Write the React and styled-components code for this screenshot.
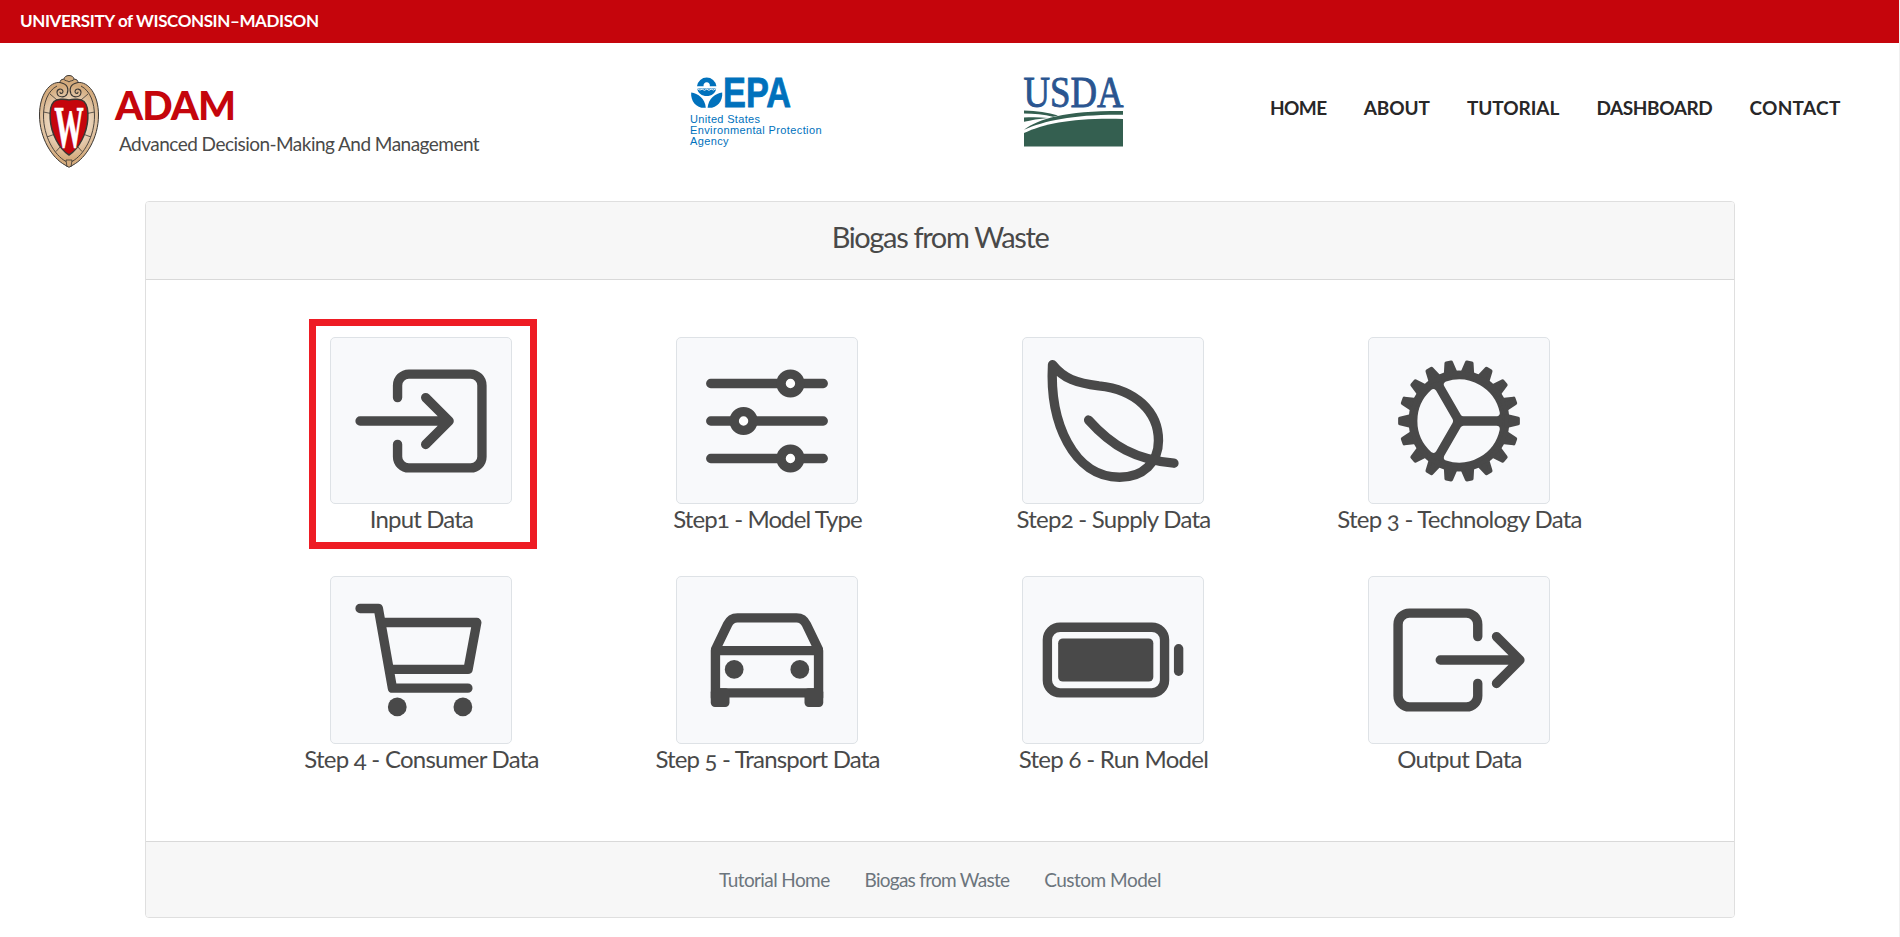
import React from 'react';
import styled, { createGlobalStyle } from 'styled-components';

const GlobalStyle = createGlobalStyle`
  *, *::before, *::after { box-sizing: border-box; }
  body { margin: 0; background: #fff; color: #494949; font-family: Lato, "Liberation Sans", sans-serif; }
  a { color: inherit; text-decoration: none; }
`;

const Page = styled.div`
  min-height: 937px;
  overflow: hidden;
  border-right: 1px solid #f0f0f0;
`;

const TopBar = styled.div`
  display: flex;
  align-items: center;
  height: 43px;
  padding: 0 0 2px 20px;
  background: #c5050c;
  color: #fff;
  font-size: 17px;
  font-weight: 700;
  letter-spacing: -0.4px;
`;

const Header = styled.header`
  display: grid;
  grid-template-columns: 649px 336px 247px auto;
  align-items: start;
  height: 158px;
  padding: 31px 0 0 38px;

  svg { overflow: visible; }
`;

const Brand = styled.a`
  display: flex;
  align-items: flex-start;
  gap: 15px;
`;

const BrandText = styled.div`
  padding-top: 7px;
`;

const SiteTitle = styled.h1`
  margin: 0;
  color: #c5050c;
  font-size: 40px;
  font-weight: 900;
  line-height: 48px;
  letter-spacing: -0.9px;
`;

const Tagline = styled.p`
  margin: 3px 0 0 4px;
  font-size: 19px;
  line-height: 23px;
  letter-spacing: -0.53px;
`;

const Nav = styled.nav`
  display: flex;
  gap: 37.2px;
  padding-top: 22px;
  color: #282728;
  font-size: 19px;
  font-weight: 700;
  line-height: 23px;
`;

const NavLink = styled.a`
  letter-spacing: ${(p) => p.$tracking}px;
`;

const Card = styled.main`
  width: 1590px;
  margin-left: 145px;
  border: 1px solid #dfdfdf;
  border-radius: 4px;
  overflow: hidden;
`;

const CardHeader = styled.div`
  height: 78px;
  padding-top: 17px;
  background: #f7f7f7;
  border-bottom: 1px solid #d9d9d9;
  text-align: center;
`;

const CardTitle = styled.h2`
  margin: 0;
  font-size: 29px;
  font-weight: 400;
  line-height: 35px;
  letter-spacing: -1.35px;
`;

const StepGrid = styled.div`
  display: grid;
  grid-template-columns: repeat(4, 346px);
  justify-content: center;
  align-content: start;
  row-gap: 43px;
  height: 561px;
  padding-top: 57px;
`;

const Step = styled.a`
  position: relative;
  display: flex;
  flex-direction: column;
  align-items: center;
`;

const Tile = styled.div`
  display: flex;
  align-items: center;
  justify-content: center;
  width: 182.4px;
  height: 167.3px;
  background: #f8f9fb;
  border: 1px solid #dee2e6;
  border-radius: 5px;
`;

const StepLabel = styled.span`
  padding-left: 1px;
  font-size: 24px;
  line-height: 29px;
  font-variant-numeric: oldstyle-nums;
  letter-spacing: ${(p) => p.$tracking}px;
  white-space: nowrap;
`;

const Highlight = styled.div`
  position: absolute;
  top: -18px;
  left: 50%;
  width: 228px;
  height: 230px;
  margin-left: -112px;
  border: 7px solid #ee1c24;
`;

const CardFooter = styled.div`
  display: flex;
  justify-content: center;
  gap: 35px;
  height: 76px;
  padding-top: 26px;
  background: #f7f7f7;
  border-top: 1px solid #d9d9d9;
`;

const FooterLink = styled.a`
  color: #6c757d;
  font-size: 19px;
  line-height: 23px;
  letter-spacing: ${(p) => p.$tracking}px;
`;

const INK = '#494949';

const Icon = ({ children }) => (
  <svg width="150" height="150" viewBox="0 0 16 16" fill="none" stroke={INK} strokeWidth="1" strokeLinecap="round" strokeLinejoin="round">
    {children}
  </svg>
);

const EnterIcon = () => (
  <Icon>
    <path d="M5.5 5.5V4.2A1.2 1.2 0 0 1 6.7 3H13.3A1.2 1.2 0 0 1 14.5 4.2V11.8A1.2 1.2 0 0 1 13.3 13H6.7A1.2 1.2 0 0 1 5.5 11.8V10.5" />
    <path d="M8.5 5.5L11 8L8.5 10.5M1.5 8H10.9" />
  </Icon>
);

const ExitIcon = () => (
  <Icon>
    <path d="M10 5.5V4.2A1.2 1.2 0 0 0 8.8 3H2.7A1.2 1.2 0 0 0 1.5 4.2V11.8A1.2 1.2 0 0 0 2.7 13H8.8A1.2 1.2 0 0 0 10 11.8V10.5" />
    <path d="M12 5.5L14.5 8L12 10.5M6 8H14.4" />
  </Icon>
);

const SlidersIcon = () => (
  <Icon>
    <path d="M2 4H14M2 8H14M2 12H14" />
    <g fill="#fff">
      <circle cx="10.5" cy="4" r="1" />
      <circle cx="5.5" cy="8" r="1" />
      <circle cx="10.5" cy="12" r="1" />
    </g>
  </Icon>
);

const LeafIcon = () => (
  <Icon>
    <path d="M1.55 2C2.75 3.5 4.1 3.95 6.5 4.25C10.4 4.65 12.85 7 12.85 10.1C12.85 12.4 11.2 14 8.7 14C3.8 14 1.2 8.2 1.55 2Z" />
    <path d="M5.4 7.9C7.9 10.7 10.4 12.1 14.5 12.5" />
  </Icon>
);

const polar = (radius, degrees) => {
  const a = (degrees * Math.PI) / 180;
  return `${(8 + radius * Math.cos(a)).toFixed(3)} ${(8 + radius * Math.sin(a)).toFixed(3)}`;
};

const gearTeeth = Array.from({ length: 18 }, (_, i) => i * 20);
const gearWindows = [0, 120, 240];

const GearIcon = () => (
  <Icon>
    <circle cx="8" cy="8" r="4.9" strokeWidth="0.95" />
    {gearTeeth.map((a) => (
      <path
        key={a}
        fill={INK}
        strokeWidth="0.4"
        d={`M${polar(5.1, a - 6.2)}L${polar(6.3, a - 2.4)}L${polar(6.3, a + 2.4)}L${polar(5.1, a + 6.2)}Z`}
      />
    ))}
    <circle cx="8" cy="8" r="4.7" fill={INK} stroke="none" />
    {gearWindows.map((a) => (
      <path
        key={a}
        fill="#f8f9fb"
        stroke="#f8f9fb"
        strokeWidth="0.7"
        d={`M${polar(0.98, a + 60)}L${polar(4.09, a + 12)}A4.09 4.09 0 0 1 ${polar(4.09, a + 108)}Z`}
      />
    ))}
  </Icon>
);

const CartIcon = () => (
  <Icon>
    <path d="M1.5 2.5H3.45L4.95 11H13" />
    <path d="M3.8 4H13.95L13.02 9H4.7" />
    <circle cx="5.47" cy="13" r="1" fill={INK} stroke="none" />
    <circle cx="12.47" cy="13" r="1" fill={INK} stroke="none" />
  </Icon>
);

const CarIcon = () => (
  <Icon>
    <path d="M2.52 6.85L3.8 4.2Q4.12 3.5 4.85 3.5H11.15Q11.88 3.5 12.2 4.2L13.48 6.85" />
    <path d="M2.5 12V7H13.5V12M2.5 11.5H13.5" />
    <g fill={INK} stroke="none">
      <rect x="2" y="11" width="2" height="2" rx="0.45" />
      <rect x="12" y="11" width="2" height="2" rx="0.45" />
      <circle cx="4.5" cy="9" r="1" />
      <circle cx="11.5" cy="9" r="1" />
    </g>
  </Icon>
);

const BatteryIcon = () => (
  <Icon>
    <rect x="1" y="4.5" width="12.5" height="7" rx="1.35" />
    <rect x="2.15" y="5.7" width="10.15" height="4.6" rx="0.5" fill={INK} stroke="none" />
    <path d="M15 6.8V9.2" />
  </Icon>
);

const CrestLogo = () => (
  <svg width="62" height="95" viewBox="0 0 62 95" fill="none" stroke="#3b3733" strokeWidth="1">
    <defs>
      <radialGradient id="crestTan" gradientUnits="userSpaceOnUse" cx="31" cy="48" r="46">
        <stop offset="0.35" stopColor="#f0dfcc" />
        <stop offset="0.8" stopColor="#d3aa7c" />
      </radialGradient>
    </defs>
    <path
      fill="url(#crestTan)"
      d="M31 1.5C34 1.5 35.5 3 36.2 5.2C39 5.2 40 6.8 40 8.5C50 7.5 60.5 20 60.5 41C60.5 64 48 84 35 91L31 93.3L27 91C14 84 1.5 64 1.5 41C1.5 20 12 7.5 22 8.5C22 6.8 23 5.2 25.8 5.2C26.5 3 28 1.5 31 1.5Z"
    />
    <path d="M22 8.5C30 10 31 15 29 20C27 24 19.5 24 19 18.5C18.8 14.5 24.5 13.8 25 17.5C25 20 21.8 20 22 17.8M40 8.5C32 10 31 15 33 20C35 24 42.5 24 43 18.5C43.2 14.5 37.5 13.8 37 17.5C37 20 40.2 20 40 17.8" strokeWidth="1.1" />
    <path d="M19 12C9.5 17 5.5 29 5.5 42C5.5 62 16 81 28 87.5M43 12C52.5 17 56.5 29 56.5 42C56.5 62 46 81 34 87.5M25.8 5.2C27 7.2 30 6.5 31 8C32 6.5 35 7.2 36.2 5.2" strokeWidth="0.9" />
    <path d="M12 20L19 26M50 20L43 26M5.5 38L13 39.5M56.5 38L49 39.5M9 63L17 60M53 63L45 60M18 77.5L23 72M44 77.5L39 72M28 86L29 93M34 86L33 93M28 86H34" strokeWidth="0.8" />
    <path d="M31 26C36 24.5 43 25 46 27.5C49.5 31 50.3 38 49.8 45C49 59 41 75 31 81C21 75 13 59 12.2 45C11.7 38 12.5 31 16 27.5C19 25 26 24.5 31 26Z" fill="#c5050c" strokeWidth="1.5" />
    <text x="31" y="73.5" transform="translate(31 0) scale(0.5 1) translate(-31 0)" textAnchor="middle" fontFamily="Liberation Serif, serif" fontWeight="700" fontSize="59" fill="#fff" stroke="#fff" strokeWidth="0.6">W</text>
  </svg>
);

const EpaLogo = () => (
  <svg width="138" height="76" viewBox="0 0 138 76" fill="#0071bc">
    <path d="M10 12.2A9.8 10 0 0 1 29.4 12.2H22.8A3.2 3.2 0 1 0 16.6 12.2Z" />
    <path d="M10.2 14.4H29.2C28.5 19 24.5 22 19.7 22C14.9 22 10.9 19 10.2 14.4Z" />
    <path d="M10.2 14.6Q13 17.2 15.2 15.2Q17.5 17.4 19.7 15.2Q22 17.4 24.2 15.2Q26.5 17.2 29.2 14.6" fill="none" stroke="#fff" strokeWidth="0.9" />
    <path d="M4.2 18.4C11 19.5 18 24 18.8 33.8C9.5 34.5 3.5 27.5 4.2 18.4Z" />
    <path d="M35.2 18.4C28.4 19.5 21.4 24 20.6 33.8C29.9 34.5 35.9 27.5 35.2 18.4Z" />
    <text x="36" y="33.2" fontFamily="Liberation Sans, sans-serif" fontWeight="700" fontSize="42" textLength="68" lengthAdjust="spacingAndGlyphs" stroke="#0071bc" strokeWidth="0.8">EPA</text>
    <g fontFamily="Liberation Sans, sans-serif" fontSize="11">
      <text x="3" y="49" textLength="70">United States</text>
      <text x="3" y="60" textLength="131.5">Environmental Protection</text>
      <text x="3" y="71.2" textLength="38.5">Agency</text>
    </g>
  </svg>
);

const UsdaLogo = () => (
  <svg width="102" height="74" viewBox="0 0 102 74">
    <text x="0.5" y="33" fontFamily="Liberation Serif, serif" fontSize="44" fill="#2a5590" stroke="#2a5590" strokeWidth="0.9" textLength="100" lengthAdjust="spacingAndGlyphs">USDA</text>
    <g fill="#345f50">
      <path d="M1 36.6C14 36.8 25 38.4 35 41.6L30 42.8C21 40.4 11 39.6 1 39.6Z" />
      <path d="M1 43.6C8 43.2 17 43.2 25 43.9C16 44.8 8 46 1 47.8Z" />
      <path d="M1 55.8C16 44.5 42 36.8 100 37V40.8C52 40.2 22 46.5 1 55.8Z" />
      <path d="M1 59C22 49 52 43.6 100 44.9V72.6H1Z" />
    </g>
  </svg>
);

const navItems = [
  { label: 'HOME', tracking: -0.6 },
  { label: 'ABOUT', tracking: -0.1 },
  { label: 'TUTORIAL', tracking: -0.05 },
  { label: 'DASHBOARD', tracking: -0.42 },
  { label: 'CONTACT', tracking: 0.3 },
];

const steps = [
  { label: 'Input Data', icon: EnterIcon, tracking: -0.85, highlighted: true },
  { label: 'Step1 - Model Type', icon: SlidersIcon, tracking: -0.9 },
  { label: 'Step2 - Supply Data', icon: LeafIcon, tracking: -0.75 },
  { label: 'Step 3 - Technology Data', icon: GearIcon, tracking: -0.75 },
  { label: 'Step 4 - Consumer Data', icon: CartIcon, tracking: -0.75 },
  { label: 'Step 5 - Transport Data', icon: CarIcon, tracking: -0.83 },
  { label: 'Step 6 - Run Model', icon: BatteryIcon, tracking: -0.7 },
  { label: 'Output Data', icon: ExitIcon, tracking: -0.75 },
];

const footerLinks = [
  { label: 'Tutorial Home', tracking: -0.6 },
  { label: 'Biogas from Waste', tracking: -0.73 },
  { label: 'Custom Model', tracking: -0.5 },
];

export default function App() {
  return (
    <>
      <GlobalStyle />
      <Page>
        <TopBar>UNIVERSITY of WISCONSIN–MADISON</TopBar>
        <Header>
          <Brand href="#">
            <CrestLogo />
            <BrandText>
              <SiteTitle>ADAM</SiteTitle>
              <Tagline>Advanced Decision-Making And Management</Tagline>
            </BrandText>
          </Brand>
          <EpaLogo />
          <UsdaLogo />
          <Nav>
            {navItems.map((item) => (
              <NavLink key={item.label} href="#" $tracking={item.tracking}>{item.label}</NavLink>
            ))}
          </Nav>
        </Header>
        <Card>
          <CardHeader>
            <CardTitle>Biogas from Waste</CardTitle>
          </CardHeader>
          <StepGrid>
            {steps.map(({ label, icon: StepIcon, tracking, highlighted }) => (
              <Step key={label} href="#">
                <Tile><StepIcon /></Tile>
                <StepLabel $tracking={tracking}>{label}</StepLabel>
                {highlighted && <Highlight />}
              </Step>
            ))}
          </StepGrid>
          <CardFooter>
            {footerLinks.map((link) => (
              <FooterLink key={link.label} href="#" $tracking={link.tracking}>{link.label}</FooterLink>
            ))}
          </CardFooter>
        </Card>
      </Page>
    </>
  );
}
